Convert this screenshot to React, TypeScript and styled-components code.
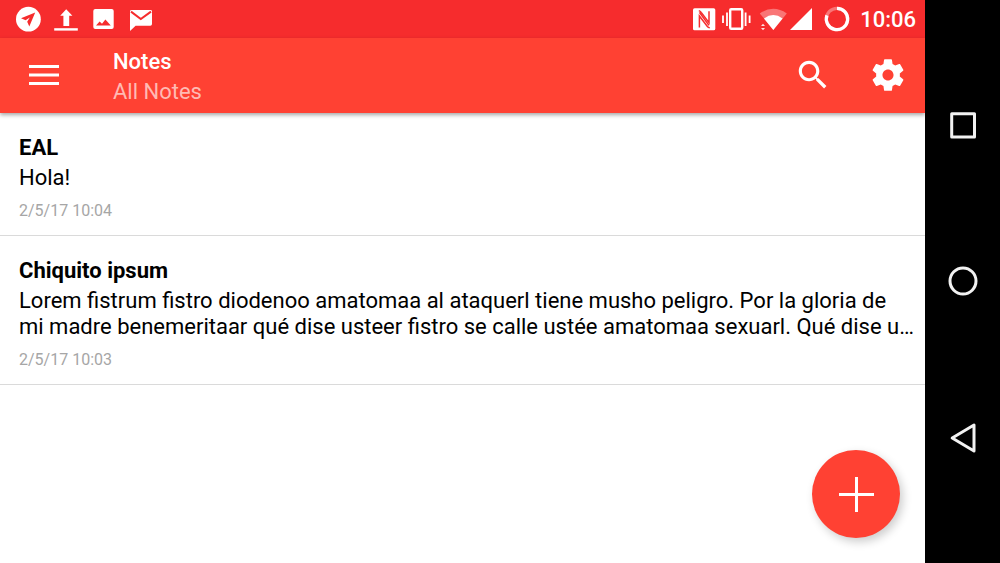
import React from "react";
import styled, { createGlobalStyle } from "styled-components";

const color = {
  status: "#f62c2d",
  primary: "#ff4133",
  subtitle: "#ffbab3",
  text: "#000000",
  date: "#a6a6a6",
  line: "#dadada",
  nav: "#f2f2f2",
};

const GlobalStyle = createGlobalStyle`
  * { box-sizing: border-box; }
  body {
    margin: 0;
    background: #fff;
    font-family: Roboto, sans-serif;
    color: ${color.text};
  }
  h1, h2, p, ul { margin: 0; padding: 0; }
`;

const Device = styled.div`
  display: flex;
  min-height: 100vh;
`;

const Screen = styled.div`
  position: relative;
  flex: 1;
  min-width: 0;
  display: flex;
  flex-direction: column;
`;

const StatusBar = styled.div`
  display: flex;
  justify-content: space-between;
  align-items: center;
  height: 38px;
  padding: 0 9px 0 16px;
  background: ${color.status};
  color: #fff;
`;

const StatusGroup = styled.div<{ $gap: number }>`
  display: flex;
  align-items: center;
  gap: ${(p) => p.$gap}px;
`;

const Clock = styled.time`
  padding-top: 2px;
  font-size: 22px;
  line-height: 26px;
  font-weight: 500;
`;

const Glyph = styled.svg`
  display: block;
  flex: none;
  overflow: visible;
`;

const Toolbar = styled.header`
  display: flex;
  align-items: flex-start;
  height: 75px;
  background: ${color.primary};
  color: #fff;
  box-shadow: 0 2px 4px rgba(0, 0, 0, 0.35);
`;

const IconButton = styled.button<{ $width: number }>`
  display: flex;
  align-items: center;
  justify-content: center;
  width: ${(p) => p.$width}px;
  height: 74px;
  padding: 0;
  border: 0;
  background: none;
  color: inherit;
  cursor: pointer;
`;

const Heading = styled.div`
  flex: 1;
  padding: 11px 0 0 25px;
  display: flex;
  flex-direction: column;
  gap: 4px;
`;

const Title = styled.h1`
  font-size: 22px;
  line-height: 26px;
  font-weight: 500;
`;

const Subtitle = styled.p`
  font-size: 22px;
  line-height: 26px;
  color: ${color.subtitle};
`;

const NoteList = styled.ul`
  list-style: none;
`;

const Note = styled.li`
  display: flex;
  flex-direction: column;
  padding: 22px 10px 14px 19px;
  border-bottom: 1px solid ${color.line};
`;

const NoteTitle = styled.h2`
  font-size: 22px;
  line-height: 26px;
  font-weight: 700;
`;

const NoteBody = styled.p`
  margin-top: 4px;
  font-size: 22px;
  line-height: 26px;
  white-space: pre-line;
`;

const NoteDate = styled.time`
  margin-top: 10px;
  font-size: 16px;
  line-height: 20px;
  color: ${color.date};
`;

const AddButton = styled.button`
  position: absolute;
  right: 25px;
  bottom: 25px;
  display: flex;
  align-items: center;
  justify-content: center;
  width: 88px;
  height: 88px;
  padding: 0;
  border: 0;
  border-radius: 50%;
  background: ${color.primary};
  color: #fff;
  box-shadow: 3px 4px 10px rgba(0, 0, 0, 0.2);
  cursor: pointer;
`;

const NavBar = styled.nav`
  display: flex;
  flex-direction: column;
  width: 75px;
  padding: 47px 0;
  background: #000;
`;

const NavButton = styled.button`
  flex: 1;
  display: flex;
  align-items: center;
  justify-content: center;
  padding: 0;
  border: 0;
  background: none;
  color: ${color.nav};
  cursor: pointer;
`;

const TelegramIcon = () => (
  <Glyph width="25" height="26" viewBox="16 6 25 26" aria-hidden="true">
    <circle cx="28.4" cy="19.2" r="12.4" fill="#fff" />
    <path d="M35.2 12.4 21 18.2 25.6 20.2 29.8 17.6 27.2 21.8 29.3 26.6Z" fill={color.status} />
  </Glyph>
);

const UploadIcon = () => (
  <Glyph width="25" height="26" viewBox="53 6 25 26" fill="#fff" aria-hidden="true">
    <path d="M66.2 9.2 72.4 15.8H69.2V26H63.4V15.8H60.2Z" />
    <path d="M54.2 28.2H77.8V30.6H54.2Z" />
  </Glyph>
);

const PictureIcon = () => (
  <Glyph width="25" height="26" viewBox="90 6 25 26" aria-hidden="true">
    <rect x="93.3" y="9" width="20.4" height="20" rx="2" fill="#fff" />
    <path d="M96 25.6 99.6 21.4 102 23.8 105.4 19.4 110.8 25.6Z" fill={color.status} />
  </Glyph>
);

const MailIcon = () => (
  <Glyph width="25" height="26" viewBox="127 6 25 26" aria-hidden="true">
    <path
      d="M131.4 10H150.6Q152 10 152 11.4V24Q152 25.8 150.3 25.8H135.6L130 31V11.4Q130 10 131.4 10Z"
      fill="#fff"
    />
    <path d="M131 11.6 140.8 19 151 11.6" fill="none" stroke={color.status} strokeWidth="2" />
  </Glyph>
);

const NfcIcon = () => (
  <Glyph width="28" height="26" viewBox="692 6 28 26" aria-hidden="true">
    <rect x="693" y="8.3" width="22.3" height="22" rx="1.6" fill="#fff" />
    <path
      d="M698.8 10.6Q700.2 11 701.2 12.4L709 22.6V11.2M699.4 27.4V16L707.2 26.2Q708.2 27.6 709.8 27.8M699.4 12.4 709 25.4"
      fill="none"
      stroke={color.status}
      strokeWidth="1.5"
    />
  </Glyph>
);

const VibrateIcon = () => (
  <Glyph width="34" height="26" viewBox="722 6 34 26" fill="none" stroke="#fff" aria-hidden="true">
    <rect x="730.2" y="9.2" width="12" height="19.6" rx="1" strokeWidth="2.4" />
    <path d="M727 12.5V26M745.6 12.5V26" strokeWidth="1.8" />
    <path d="M723 15.5V23M749.6 15.5V23" strokeWidth="1.8" />
  </Glyph>
);

const WifiIcon = () => (
  <Glyph width="29" height="26" viewBox="758 6 29 26" fill="#fff" aria-hidden="true">
    <path d="M759.8 13.4Q773.3 4.2 786.8 13.4L773.3 30Z" opacity="0.35" />
    <path d="M764 18.4Q773.3 11.6 782.6 18.4L773.3 30Z" />
    <path d="M761 26 763 23.8 765 26ZM761 28 763 30.2 765 28Z" opacity="0.85" />
  </Glyph>
);

const SignalIcon = () => (
  <Glyph width="28" height="26" viewBox="789 6 28 26" fill="#fff" aria-hidden="true">
    <path d="M812 8V30H790Z" />
  </Glyph>
);

const BatteryIcon = () => (
  <Glyph width="39" height="26" viewBox="819 6 39 26" fill="none" stroke="#fff" strokeWidth="3.2" aria-hidden="true">
    <circle cx="837" cy="19" r="10.7" opacity="0.35" />
    <path d="M837 8.3A10.7 10.7 0 1 1 826.9 15.4" />
  </Glyph>
);

const MenuIcon = () => (
  <Glyph width="30" height="20" viewBox="0 0 30 20" fill="currentColor" aria-hidden="true">
    <path d="M0 0H30V3H0ZM0 8.4H30V11.4H0ZM0 17H30V20H0Z" />
  </Glyph>
);

const SearchIcon = () => (
  <Glyph width="38" height="38" viewBox="0 0 24 24" fill="currentColor" aria-hidden="true">
    <path d="M15.5 14h-.79l-.28-.27C15.41 12.59 16 11.11 16 9.5 16 5.91 13.09 3 9.5 3S3 5.91 3 9.5 5.91 16 9.5 16c1.61 0 3.09-.59 4.23-1.57l.27.28v.79l5 4.99L20.49 19l-4.99-5zm-6 0C7.01 14 5 11.99 5 9.5S7.01 5 9.5 5 14 7.01 14 9.5 11.99 14 9.5 14z" />
  </Glyph>
);

const SettingsIcon = () => (
  <Glyph width="38" height="38" viewBox="0 0 24 24" fill="currentColor" aria-hidden="true">
    <path d="M19.43 12.98c.04-.32.07-.64.07-.98s-.03-.66-.07-.98l2.11-1.65c.19-.15.24-.42.12-.64l-2-3.46c-.12-.22-.39-.3-.61-.22l-2.49 1c-.52-.4-1.08-.73-1.69-.98l-.38-2.65C14.46 2.18 14.25 2 14 2h-4c-.25 0-.46.18-.49.42l-.38 2.65c-.61.25-1.17.59-1.69.98l-2.49-1c-.23-.09-.49 0-.61.22l-2 3.46c-.13.22-.07.49.12.64l2.11 1.65c-.04.32-.07.65-.07.98s.03.66.07.98l-2.11 1.65c-.19.15-.24.42-.12.64l2 3.46c.12.22.39.3.61.22l2.49-1c.52.4 1.08.73 1.69.98l.38 2.65c.03.24.24.42.49.42h4c.25 0 .46-.18.49-.42l.38-2.65c.61-.25 1.17-.59 1.69-.98l2.49 1c.23.09.49 0 .61-.22l2-3.46c.12-.22.07-.49-.12-.64l-2.11-1.65zM12 15.5c-1.93 0-3.5-1.57-3.5-3.5s1.57-3.5 3.5-3.5 3.5 1.57 3.5 3.5-1.57 3.5-3.5 3.5z" />
  </Glyph>
);

const PlusIcon = () => (
  <Glyph width="36" height="36" viewBox="0 0 36 36" stroke="currentColor" strokeWidth="3" aria-hidden="true">
    <path d="M1 18.5H36M18.5 1V36" />
  </Glyph>
);

const NavGlyph = ({ children }: { children: React.ReactNode }) => (
  <Glyph
    width="30"
    height="30"
    viewBox="0 0 30 30"
    fill="none"
    stroke="currentColor"
    strokeWidth="3"
    strokeLinejoin="round"
    aria-hidden="true"
  >
    {children}
  </Glyph>
);

const notes = [
  { title: "EAL", body: "Hola!", date: "2/5/17 10:04" },
  {
    title: "Chiquito ipsum",
    body: "Lorem fistrum fistro diodenoo amatomaa al ataquerl tiene musho peligro. Por la gloria de\nmi madre benemeritaar qué dise usteer fistro se calle ustée amatomaa sexuarl. Qué dise u…",
    date: "2/5/17 10:03",
  },
];

export default function App() {
  return (
    <>
      <GlobalStyle />
      <Device>
        <Screen>
          <StatusBar>
            <StatusGroup $gap={12}>
              <TelegramIcon />
              <UploadIcon />
              <PictureIcon />
              <MailIcon />
            </StatusGroup>
            <StatusGroup $gap={2}>
              <NfcIcon />
              <VibrateIcon />
              <WifiIcon />
              <SignalIcon />
              <BatteryIcon />
              <Clock>10:06</Clock>
            </StatusGroup>
          </StatusBar>
          <Toolbar>
            <IconButton $width={88} type="button" aria-label="Menu">
              <MenuIcon />
            </IconButton>
            <Heading>
              <Title>Notes</Title>
              <Subtitle>All Notes</Subtitle>
            </Heading>
            <IconButton $width={75} type="button" aria-label="Search">
              <SearchIcon />
            </IconButton>
            <IconButton $width={75} type="button" aria-label="Settings">
              <SettingsIcon />
            </IconButton>
          </Toolbar>
          <main>
            <NoteList>
              {notes.map((note) => (
                <Note key={note.title}>
                  <NoteTitle>{note.title}</NoteTitle>
                  <NoteBody>{note.body}</NoteBody>
                  <NoteDate>{note.date}</NoteDate>
                </Note>
              ))}
            </NoteList>
          </main>
          <AddButton type="button" aria-label="Add note">
            <PlusIcon />
          </AddButton>
        </Screen>
        <NavBar aria-label="System">
          <NavButton type="button" aria-label="Recent apps">
            <NavGlyph>
              <rect x="3.7" y="3.7" width="22.8" height="23.2" />
            </NavGlyph>
          </NavButton>
          <NavButton type="button" aria-label="Home">
            <NavGlyph>
              <circle cx="15" cy="15" r="13" />
            </NavGlyph>
          </NavButton>
          <NavButton type="button" aria-label="Back">
            <NavGlyph>
              <path d="M4.2 15 26 2V28Z" />
            </NavGlyph>
          </NavButton>
        </NavBar>
      </Device>
    </>
  );
}
